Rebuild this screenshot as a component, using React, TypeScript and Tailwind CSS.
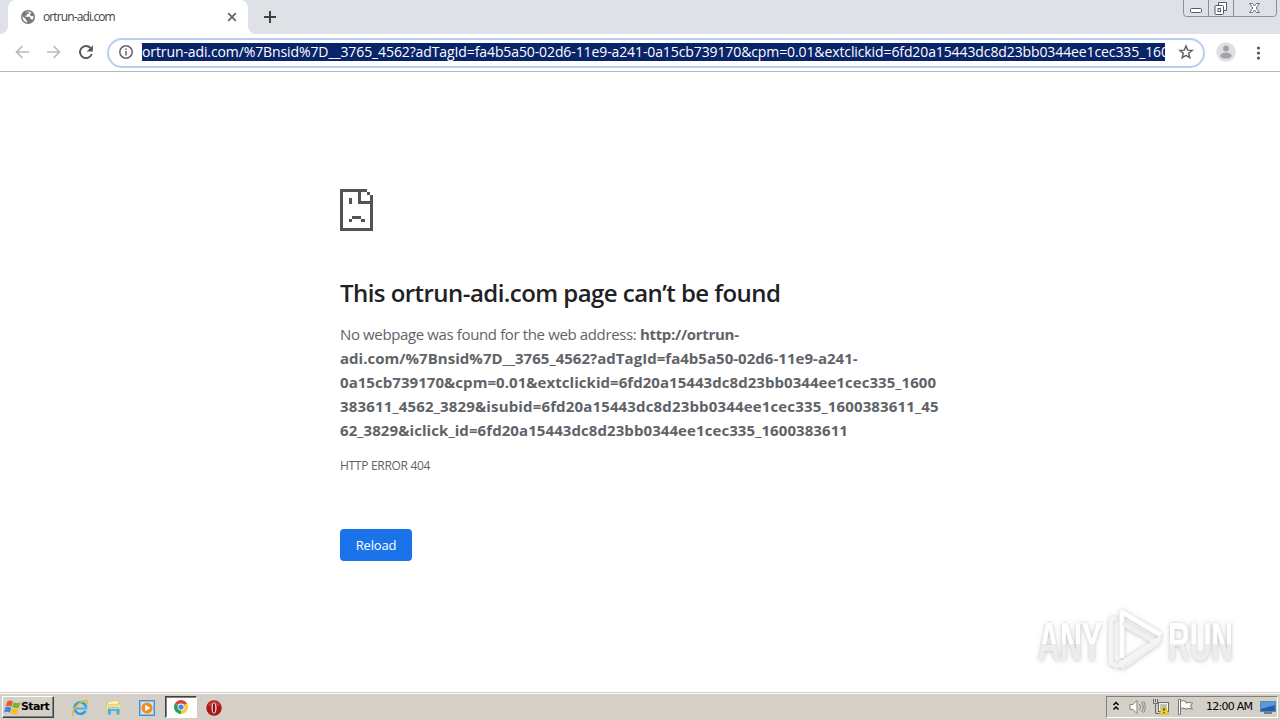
import React from "react";

const URL_LINES = [
  { text: "adi.com/%7Bnsid%7D__3765_4562?adTagId=fa4b5a50-02d6-11e9-a241-", track: "tracking-[0.03px]" },
  { text: "0a15cb739170&cpm=0.01&extclickid=6fd20a15443dc8d23bb0344ee1cec335_1600", track: "tracking-[0.05px]" },
  { text: "383611_4562_3829&isubid=6fd20a15443dc8d23bb0344ee1cec335_1600383611_45", track: "tracking-[0.155px]" },
  { text: "62_3829&iclick_id=6fd20a15443dc8d23bb0344ee1cec335_1600383611", track: "tracking-[0.08px]" },
];

function Globe() {
  return (
    <svg className="h-[14px] w-[14px] shrink-0" viewBox="0 0 14 14">
      <circle cx="7" cy="7" r="7" fill="#75797d" />
      <path d="M1.500 6.300 5 9.300V10.300L6.300 11.300V12.500C3.200 12 1.200 9.300 1.500 6.300Z" fill="#fff" />
      <path d="M4 2.500Q6 1.200 8.500 1.500V2.800L7.300 4H5.800V5.500H4.500V6.800H8.500L9.500 8V9.300H10.700L11.300 10Q12.800 8.300 12.400 6L10.500 6.200 9 5V4L10.500 3 9.500 1.900Z" fill="#fff" />
    </svg>
  );
}

function TabStrip() {
  return (
    <div className="flex h-[34px] bg-[#dee1e6]">
      <div className="flex w-[8px] bg-white">
        <div className="h-full w-full rounded-br-[8px] bg-[#dee1e6]" />
      </div>
      <div className="flex h-full w-[240px] items-center rounded-t-[8px] bg-white pr-[10px] pl-[13px]">
        <Globe />
        <span className="ml-[8px] text-[12px] leading-[16px] tracking-[-0.88px] text-[#3c4043]">ortrun-adi.com</span>
        <svg className="ml-auto h-[12px] w-[12px]" viewBox="0 0 12 12">
          <path d="m2.200 2.200 7.600 7.600m0-7.600-7.600 7.600" stroke="#5f6368" strokeWidth="1.700" />
        </svg>
      </div>
      <div className="flex w-[8px] bg-white">
        <div className="h-full w-full rounded-bl-[8px] bg-[#dee1e6]" />
      </div>
      <svg className="mt-[11px] ml-[8px] h-[12px] w-[12px]" viewBox="0 0 12 12">
        <path d="M6 0v12M0 6h12" stroke="#3c4043" strokeWidth="2" />
      </svg>
      <svg className="mr-[3px] ml-auto h-[18px] w-[94px]" viewBox="0 0 94 18">
        <path d="M.5 0v13.500q0 3 3 3h87q3 0 3-3V0M25.500 0v16.500M50.500 0v16.500" fill="none" stroke="#8b9098" />
        <rect x="7.500" y="8.500" width="11" height="4" rx="1" fill="#fff" stroke="#555b66" />
        <path d="M35.500 5.500v-3h8v8h-3" fill="#fff" stroke="#555b66" />
        <rect x="32" y="5.500" width="8.500" height="9" rx="1" fill="#fff" stroke="#555b66" />
        <rect x="35" y="8.500" width="2.500" height="3" fill="#fff" stroke="#555b66" />
        <path d="M66.500 3.500h3l2 2.500 2-2.500h3l-3.300 4.500 3.300 4.500h-3l-2-2.500-2 2.500h-3l3.300-4.500Z" fill="#fff" stroke="#686e78" />
      </svg>
    </div>
  );
}

function Toolbar() {
  return (
    <div className="flex h-[38px] items-center border-b border-[#b5b7ba] bg-white pr-[16px] pl-[15px]">
      <svg className="mb-[1px] h-[14px] w-[14px]" viewBox="0 0 14 14" fill="none" stroke="#b9bbbe" strokeWidth="1.700">
        <path d="M14 7H1.500M7.500 1 1.500 7l6 6" />
      </svg>
      <svg className="mb-[1px] ml-[18px] h-[14px] w-[14px]" viewBox="0 0 14 14" fill="none" stroke="#b9bbbe" strokeWidth="1.700">
        <path d="M0 7h12.500M6.500 1l6 6-6 6" />
      </svg>
      <svg className="mb-[1px] ml-[18px] h-[14px] w-[14px]" viewBox="0 0 14 14">
        <path d="M11.600 3.200A6 6 0 1 0 12.700 9" fill="none" stroke="#54575b" strokeWidth="1.900" />
        <path d="M13.900.2v6.200H7.700Z" fill="#54575b" />
      </svg>
      <div className="ml-[14px] flex h-[30px] w-[1098px] items-center rounded-full border-2 border-[#b9cdf3] bg-white pr-[9px] pl-[10px]">
        <svg className="mb-[1px] h-[14px] w-[14px] shrink-0" viewBox="0 0 14 14">
          <circle cx="7" cy="7" r="6.200" fill="none" stroke="#5f6368" strokeWidth="1.500" />
          <path d="M7 6v4.500M7 3.400v1.500" stroke="#5f6368" strokeWidth="1.500" />
        </svg>
        <div className="mb-[1px] ml-[9px] h-[18px] w-[1023px] shrink-0 overflow-hidden bg-[#0a246a] text-[14px] leading-[17px] tracking-[-0.105px] whitespace-nowrap text-white">
          ortrun-adi.com/%7Bnsid%7D__3765_4562?adTagId=fa4b5a50-02d6-11e9-a241-0a15cb739170&amp;cpm=0.01&amp;extclickid=6fd20a15443dc8d23bb0344ee1cec335_160
        </div>
        <svg className="mb-[1px] ml-auto h-[16px] w-[16px] shrink-0" viewBox="0 0 24 24" fill="none" stroke="#5f6368" strokeWidth="2.200">
          <path d="m12 3 2.500 6.200 6.700.5-5.100 4.300 1.600 6.500-5.700-3.500-5.700 3.500 1.600-6.500L2.800 9.700l6.700-.5Z" />
        </svg>
      </div>
      <svg className="mb-[1px] ml-[11px] h-[20px] w-[20px]" viewBox="0 0 20 20">
        <circle cx="10" cy="10" r="9.800" fill="#dfe0e2" />
        <circle cx="10" cy="6.400" r="3" fill="#a1a4a8" />
        <ellipse cx="10" cy="13.600" rx="5.700" ry="3" fill="#a1a4a8" />
      </svg>
      <svg className="ml-auto h-[14px] w-[12px]" viewBox="0 0 12 14" fill="#54575b">
        <circle cx="6.500" cy="2" r="1.600" />
        <circle cx="6.500" cy="7" r="1.600" />
        <circle cx="6.500" cy="12" r="1.600" />
      </svg>
    </div>
  );
}

function SadPage() {
  return (
    <svg className="h-[42px] w-[34px]" viewBox="0 0 34 42" fill="#535353" shapeRendering="crispEdges">
      <path d="M0 0h27v3H3v36h27V15H18V3h3v9h9V9h3v33H0Z" />
      <path d="M27 3h3v3h-3zM30 6h3v3h-3zM9 9h3v6H9zM12 27h9v3h-9zM9 30h3v3H9zM21 30h4v3h-4z" />
    </svg>
  );
}

function Watermark() {
  return (
    <svg className="absolute top-[528px] left-[1020px] h-[80px] w-[230px]" viewBox="0 0 230 80">
      <defs>
        <linearGradient id="face" x1="0" y1="0" x2="0" y2="1">
          <stop offset="0.54" stopColor="#fff" />
          <stop offset="0.55" stopColor="#ededed" />
        </linearGradient>
        <filter id="halo" x="-10%" y="-20%" width="120%" height="140%">
          <feDropShadow dx="0" dy="0.500" stdDeviation="2.200" floodColor="#777" floodOpacity="0.500" />
        </filter>
      </defs>
      <g filter="url(#halo)" fill="url(#face)" fontFamily="Liberation Sans, Arial, sans-serif" fontSize="53" fontWeight="bold">
        <text x="18" y="60" textLength="64" lengthAdjust="spacingAndGlyphs">ANY</text>
        <text x="148" y="60" textLength="65" lengthAdjust="spacingAndGlyphs">RUN</text>
        <g fill="none" stroke="#fff" strokeWidth="4.500" strokeLinejoin="round">
          <path d="M102 58V12l39 23" />
          <path d="M102 23l35 20-36 25" stroke="#f0f0f0" />
          <path d="M96 17l-5 3v43l6 3 44-28" stroke="#f4f4f4" />
        </g>
      </g>
    </svg>
  );
}

function ErrorPage() {
  return (
    <main className="relative h-[620px] bg-white pt-[117px] pl-[340px] text-[#5f6368]">
      <SadPage />
      <h1 className="mt-[46px] text-[24px] leading-[32px] font-semibold tracking-[-0.55px] whitespace-nowrap text-[#202124]">
        This ortrun-adi.com page can’t be found
      </h1>
      <div className="mt-[13px] text-[15px] leading-[24px] whitespace-nowrap">
        <p>
          <span className="tracking-[-0.37px]">No webpage was found for the web address: </span>
          <b className="font-bold tracking-[-0.3px]">http://ortrun-</b>
        </p>
        {URL_LINES.map((line) => (
          <p key={line.text}>
            <b className={"font-bold " + line.track}>{line.text}</b>
          </p>
        ))}
      </div>
      <p className="mt-[16px] text-[12px] leading-[16px] tracking-[-0.3px]">HTTP ERROR 404</p>
      <button className="mt-[55px] block h-[32px] w-[72px] rounded-[4px] bg-[#1a73e8] pt-[1px] text-[13px] tracking-[-0.2px] text-white">
        Reload
      </button>
      <Watermark />
    </main>
  );
}

function WindowsFlag() {
  return (
    <svg className="h-[17px] w-[17px] shrink-0" viewBox="0 1 16 14">
      <path d="M3 2.500q3-2 5.300 0L7 7.300Q5 5.500 1.500 7Z" fill="#e65b28" />
      <path d="M9 3q3 1.600 6.500 0L14 8q-3 1.300-6.200-.4Z" fill="#79b52c" />
      <path d="M1.200 8q3-1.500 5.600.2L5.500 13Q3 11.300 0 12.800Z" fill="#3d89d6" />
      <path d="M7.500 8.600q3 1.500 6.300.3L12.500 14q-3 1.300-6.300-.6Z" fill="#f7bd2a" />
    </svg>
  );
}

function ExplorerE() {
  return (
    <svg className="h-[18px] w-[18px]" viewBox="0 0 18 18" fill="none">
      <path d="M14.500 11.800a5.800 5.800 0 1 1 .6-3.500" stroke="#2f9fe0" strokeWidth="2.600" />
      <path d="M4.500 9.500h11.800" stroke="#4fb5ea" strokeWidth="2.200" />
      <path d="M3 16.500C-1.500 15 7 2 15 1.500q2.500.2 1 4" stroke="#e8b92d" strokeWidth="1.600" />
    </svg>
  );
}

function Folder() {
  return (
    <svg className="h-[17px] w-[17px]" viewBox="0 0 17 17">
      <path d="M1.500 3h5l1-1.500h6V4h1.500v8h-13.500Z" fill="#e5c35a" />
      <path d="M3 3h4l1-1h5v3H3Z" fill="#fbf0b8" />
      <path d="M1.500 5.500h13.500V11H1.500Z" fill="#f7e18c" />
      <path d="M3 15.500V10q0-1.500 1.500-1.500h8.500q1.500 0 1.500 1.500v5.500h-3v-3.700H6v3.700Z" fill="#54acd8" />
      <path d="M4 9.500h9.500" stroke="#b6e3f4" />
    </svg>
  );
}

function MediaPlayer() {
  return (
    <svg className="h-[16px] w-[16px]" viewBox="0 0 16 16">
      <rect x=".5" y=".5" width="15" height="15" fill="#8fbce3" stroke="#4f8dc7" />
      <rect x="2" y="2" width="12" height="12" fill="#cfe5f7" />
      <circle cx="8" cy="8" r="5.600" fill="#f38b1c" />
      <path d="m6.200 4.800 5 3.200-5 3.200Z" fill="#fff" />
    </svg>
  );
}

function ChromeIcon() {
  return (
    <svg className="h-[14px] w-[14px]" viewBox="0 0 14 14">
      <path d="M7 7 .94 3.500A7 7 0 0 1 13.060 3.500Z" fill="#e04437" />
      <path d="M7 7V14A7 7 0 0 1 .94 3.500Z" fill="#23a257" />
      <path d="M7 7 13.060 3.500A7 7 0 0 1 7 14Z" fill="#f8cb3c" />
      <circle cx="7" cy="7" r="3.400" fill="#fff" />
      <circle cx="7" cy="7" r="2.600" fill="#4284ec" />
    </svg>
  );
}

function OperaIcon() {
  return (
    <svg className="h-[16px] w-[16px]" viewBox="0 0 16 16">
      <circle cx="8" cy="8" r="7.700" fill="#ad1518" />
      <path d="M2 6a6.200 6 0 0 1 12 0" fill="#c93a36" />
      <ellipse cx="8" cy="8" rx="2.500" ry="5.500" fill="#f5eeee" />
      <ellipse cx="8" cy="8" rx="1.300" ry="4.700" fill="#86100f" />
    </svg>
  );
}

function Tray() {
  return (
    <div className="mr-[2px] ml-auto flex h-[22px] w-[172px] items-center border border-t-[#808080] border-r-white border-b-white border-l-[#808080] pl-[5px]">
      <svg className="mb-[2px] h-[10px] w-[8px]" viewBox="0 0 8 10" fill="none" stroke="#000" strokeWidth="1.500">
        <path d="m1.500 4 2.500-2.500L6.500 4M1.500 8.500 4 6l2.500 2.500" />
      </svg>
      <svg className="ml-[9px] h-[16px] w-[17px]" viewBox="0 0 17 16" fill="none" stroke="#858585">
        <path d="M1 5.500h3l4-4v13l-4-4H1Z" fill="#fafafa" />
        <path d="M10.500 5q2 3 0 6M12.500 3q3.500 5 0 10M14.500 2q3.500 6 0 12" />
      </svg>
      <svg className="ml-[7px] h-[16px] w-[17px]" viewBox="0 0 17 16">
        <rect x="5.500" y="3.500" width="10" height="9" fill="#f2f2f2" stroke="#6b6b6b" />
        <path d="M7 5h7v6H7Z" fill="#c3c7ca" />
        <path d="M.5 0v4.500h4V0M2.500 0v3M2.500 4.500v10h4" fill="none" stroke="#686868" />
        <path d="m11 6.500 5 8.500H6Z" fill="#f7d42d" stroke="#c79e16" strokeWidth=".6" />
        <path d="M11 9v3M11 13v1.300" stroke="#423500" strokeWidth="1.200" />
      </svg>
      <svg className="ml-[7px] h-[16px] w-[17px]" viewBox="0 0 17 16" fill="#fafafa" stroke="#777">
        <path d="M1.500.5h2v15h-2Z" />
        <path d="M3.500 2q3-1 5.500.5V4q3-1 6.500 0l-2 3 2 3q-4-1-6.500 0-3-1.500-5.500-.5Z" />
      </svg>
      <span className="ml-[12px] font-['DejaVu_Sans',sans-serif] text-[11px] leading-[14px] tracking-[-0.75px] whitespace-nowrap text-black">12:00 AM</span>
      <svg className="mr-[1px] ml-auto h-[14px] w-[16px] shrink-0" viewBox="0 0 16 14">
        <rect x=".5" y="1.500" width="15" height="10" fill="#245fae" stroke="#6387ad" />
        <path d="M1 2h14v3L1 9Z" fill="#579bdd" />
        <path d="M4 13h8" stroke="#4c657d" strokeWidth="1.500" />
      </svg>
    </div>
  );
}

function Taskbar() {
  return (
    <footer className="flex h-[28px] flex-col bg-[#d4d0c8]">
      <div className="mt-[1px] h-px shrink-0 bg-white" />
      <div className="flex h-[26px] items-center">
        <div className="ml-[2px] flex h-[22px] w-[52px] items-center border border-t-white border-r-[#404040] border-b-[#404040] border-l-white pl-[1px] shadow-[inset_-1px_-1px_0_#808080]">
          <WindowsFlag />
          <span className="font-['DejaVu_Sans',sans-serif] text-[11px] leading-[14px] font-bold tracking-[-0.65px] text-black">Start</span>
        </div>
        <div className="ml-[17px] flex items-center gap-[16px] pt-px">
          <ExplorerE />
          <Folder />
          <div className="pl-px">
            <MediaPlayer />
          </div>
        </div>
        <div className="ml-[10px] flex h-[22px] w-[32px] items-center justify-center border border-t-[#404040] border-r-white border-b-white border-l-[#404040] bg-white shadow-[inset_1px_1px_0_#808080]">
          <ChromeIcon />
        </div>
        <div className="ml-[9px] pt-px">
          <OperaIcon />
        </div>
        <Tray />
      </div>
    </footer>
  );
}

export default function App() {
  return (
    <div className="h-[720px] w-[1280px] overflow-hidden bg-white font-['Open_Sans','Noto_Sans',sans-serif]">
      <TabStrip />
      <Toolbar />
      <ErrorPage />
      <Taskbar />
    </div>
  );
}
